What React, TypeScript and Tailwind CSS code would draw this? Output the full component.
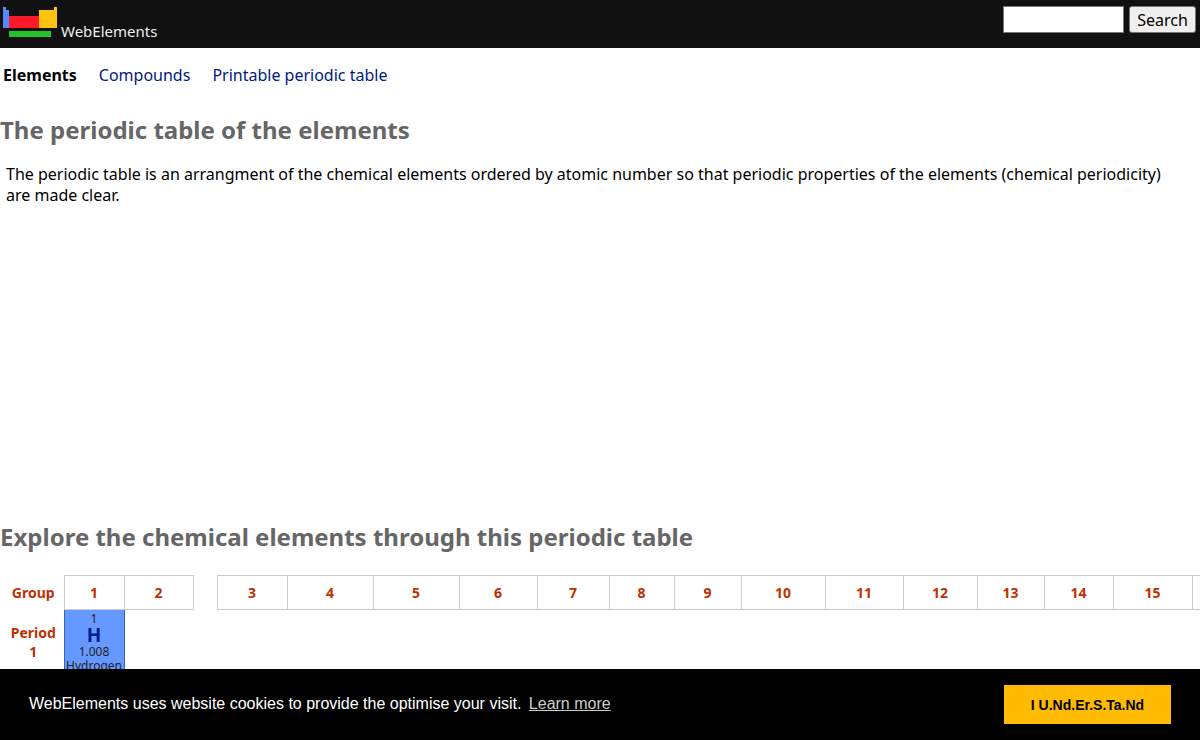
const navLinks = [
  { label: 'Elements', href: '/', active: true },
  { label: 'Compounds', href: '/compounds/', active: false },
  { label: 'Printable periodic table', href: '/nexus/printable-periodic-table/', active: false },
];

// null is the gap between group 2 and the d-block
const groups = [
  { label: '1', width: 'w-[60px]' },
  { label: '2', width: 'w-[69px]' },
  { label: null, width: 'w-[24px]' },
  { label: '3', width: 'w-[70px]' },
  { label: '4', width: 'w-[86px]' },
  { label: '5', width: 'w-[86px]' },
  { label: '6', width: 'w-[78px]' },
  { label: '7', width: 'w-[72px]' },
  { label: '8', width: 'w-[65px]' },
  { label: '9', width: 'w-[67px]' },
  { label: '10', width: 'w-[84px]' },
  { label: '11', width: 'w-[78px]' },
  { label: '12', width: 'w-[74px]' },
  { label: '13', width: 'w-[67px]' },
  { label: '14', width: 'w-[69px]' },
  { label: '15', width: 'w-[79px]' },
  { label: '16', width: 'w-[70px]' },
  { label: '17', width: 'w-[70px]' },
  { label: '18', width: 'w-[70px]' },
];

function Logo() {
  return (
    <svg width="54" height="31" viewBox="0 0 54 31" shapeRendering="crispEdges" aria-hidden="true">
      <path d="M0 0h3v3h3v18H0z" fill="#5588ff" />
      <path d="M6 9h30v12H6z" fill="#ff1a2b" />
      <path d="M36 3h15V0h3v21H36z" fill="#ffc20e" />
      <path d="M6 24h42v6H6z" fill="#22c32e" />
    </svg>
  );
}

function Header() {
  return (
    <header className="flex h-12 items-start justify-between bg-[#111] pl-[3px] pr-1">
      <a href="/" className="flex items-end gap-1 pt-[7px] text-[15px] leading-[14px] text-[#eee]">
        <Logo />
        <span>WebElements</span>
      </a>
      <form className="flex gap-[5px] pt-[6px]">
        <input
          type="text"
          aria-label="Search"
          className="h-[27px] w-[121px] border border-[#767676] bg-white px-1 text-black"
        />
        <button
          type="submit"
          className="h-[27px] w-[67px] rounded-[3px] border border-[#767676] bg-[#efefef] text-[16px] leading-6 text-black"
        >
          Search
        </button>
      </form>
    </header>
  );
}

function PeriodicTable() {
  return (
    <div className="mt-[22px] overflow-hidden pl-[3px]">
      <table className="w-[1399px] table-fixed border-collapse text-center text-[14px] leading-[19px]">
        <colgroup>
          <col className="w-[61px]" />
          {groups.map((group, i) => (
            <col key={i} className={group.width} />
          ))}
        </colgroup>
        <tbody>
          <tr className="h-[34px] text-[#c03000]">
            <th scope="row">Group</th>
            {groups.map((group, i) =>
              group.label ? (
                <th key={i} scope="col" className="border border-[#ccc]">
                  {group.label}
                </th>
              ) : (
                <td key={i} />
              )
            )}
          </tr>
          <tr>
            <th scope="row" className="text-[#c03000]">
              Period
              <br />1
            </th>
            <td className="h-[64px] border border-[#36a] bg-[#6699ff] pt-[2px] text-[12px] leading-[14px] text-[#222]">
              <div>1</div>
              <a href="/hydrogen/" className="block text-[19px] font-bold leading-[19px] text-[#001a90]">
                H
              </a>
              <div>1.008</div>
              <div className="whitespace-nowrap">Hydrogen</div>
            </td>
          </tr>
        </tbody>
      </table>
    </div>
  );
}

function CookieBar() {
  return (
    <div
      role="dialog"
      aria-label="Cookie consent"
      className="fixed inset-x-0 bottom-0 flex items-center justify-between bg-black py-4 pl-[29px] pr-[29px] font-['Liberation_Sans',sans-serif] text-[16px] leading-6 text-white"
    >
      <p className="pb-0.5">
        WebElements uses website cookies to provide the optimise your visit.{' '}
        <a href="/cookies/" className="ml-[3px] text-[#ccc] underline">
          Learn more
        </a>
      </p>
      <button type="button" className="h-[39px] w-[167px] bg-[#ffbb00] text-[14px] font-bold text-black">
        I U.Nd.Er.S.Ta.Nd
      </button>
    </div>
  );
}

export default function App() {
  return (
    <div className="min-h-screen bg-white font-['Noto_Sans',sans-serif] text-[16px] leading-[21px] text-black">
      <Header />
      <nav className="flex gap-[22px] pl-[3px] pt-[17px]">
        {navLinks.map((link) => (
          <a
            key={link.label}
            href={link.href}
            className={link.active ? 'font-bold text-black' : 'text-[#001a80]'}
          >
            {link.label}
          </a>
        ))}
      </nav>
      <main>
        <h1 className="mt-7 text-[24px] font-bold leading-8 text-[#666]">The periodic table of the elements</h1>
        <p className="mt-[18px] pl-[6px] pr-4">
          The periodic table is an arrangment of the chemical elements ordered by atomic number so that periodic
          properties of the elements (chemical periodicity) are made clear.
        </p>
        <div className="h-[315px]" />
        <h2 className="text-[24px] font-bold leading-8 text-[#666]">
          Explore the chemical elements through this periodic table
        </h2>
        <PeriodicTable />
      </main>
      <CookieBar />
    </div>
  );
}
